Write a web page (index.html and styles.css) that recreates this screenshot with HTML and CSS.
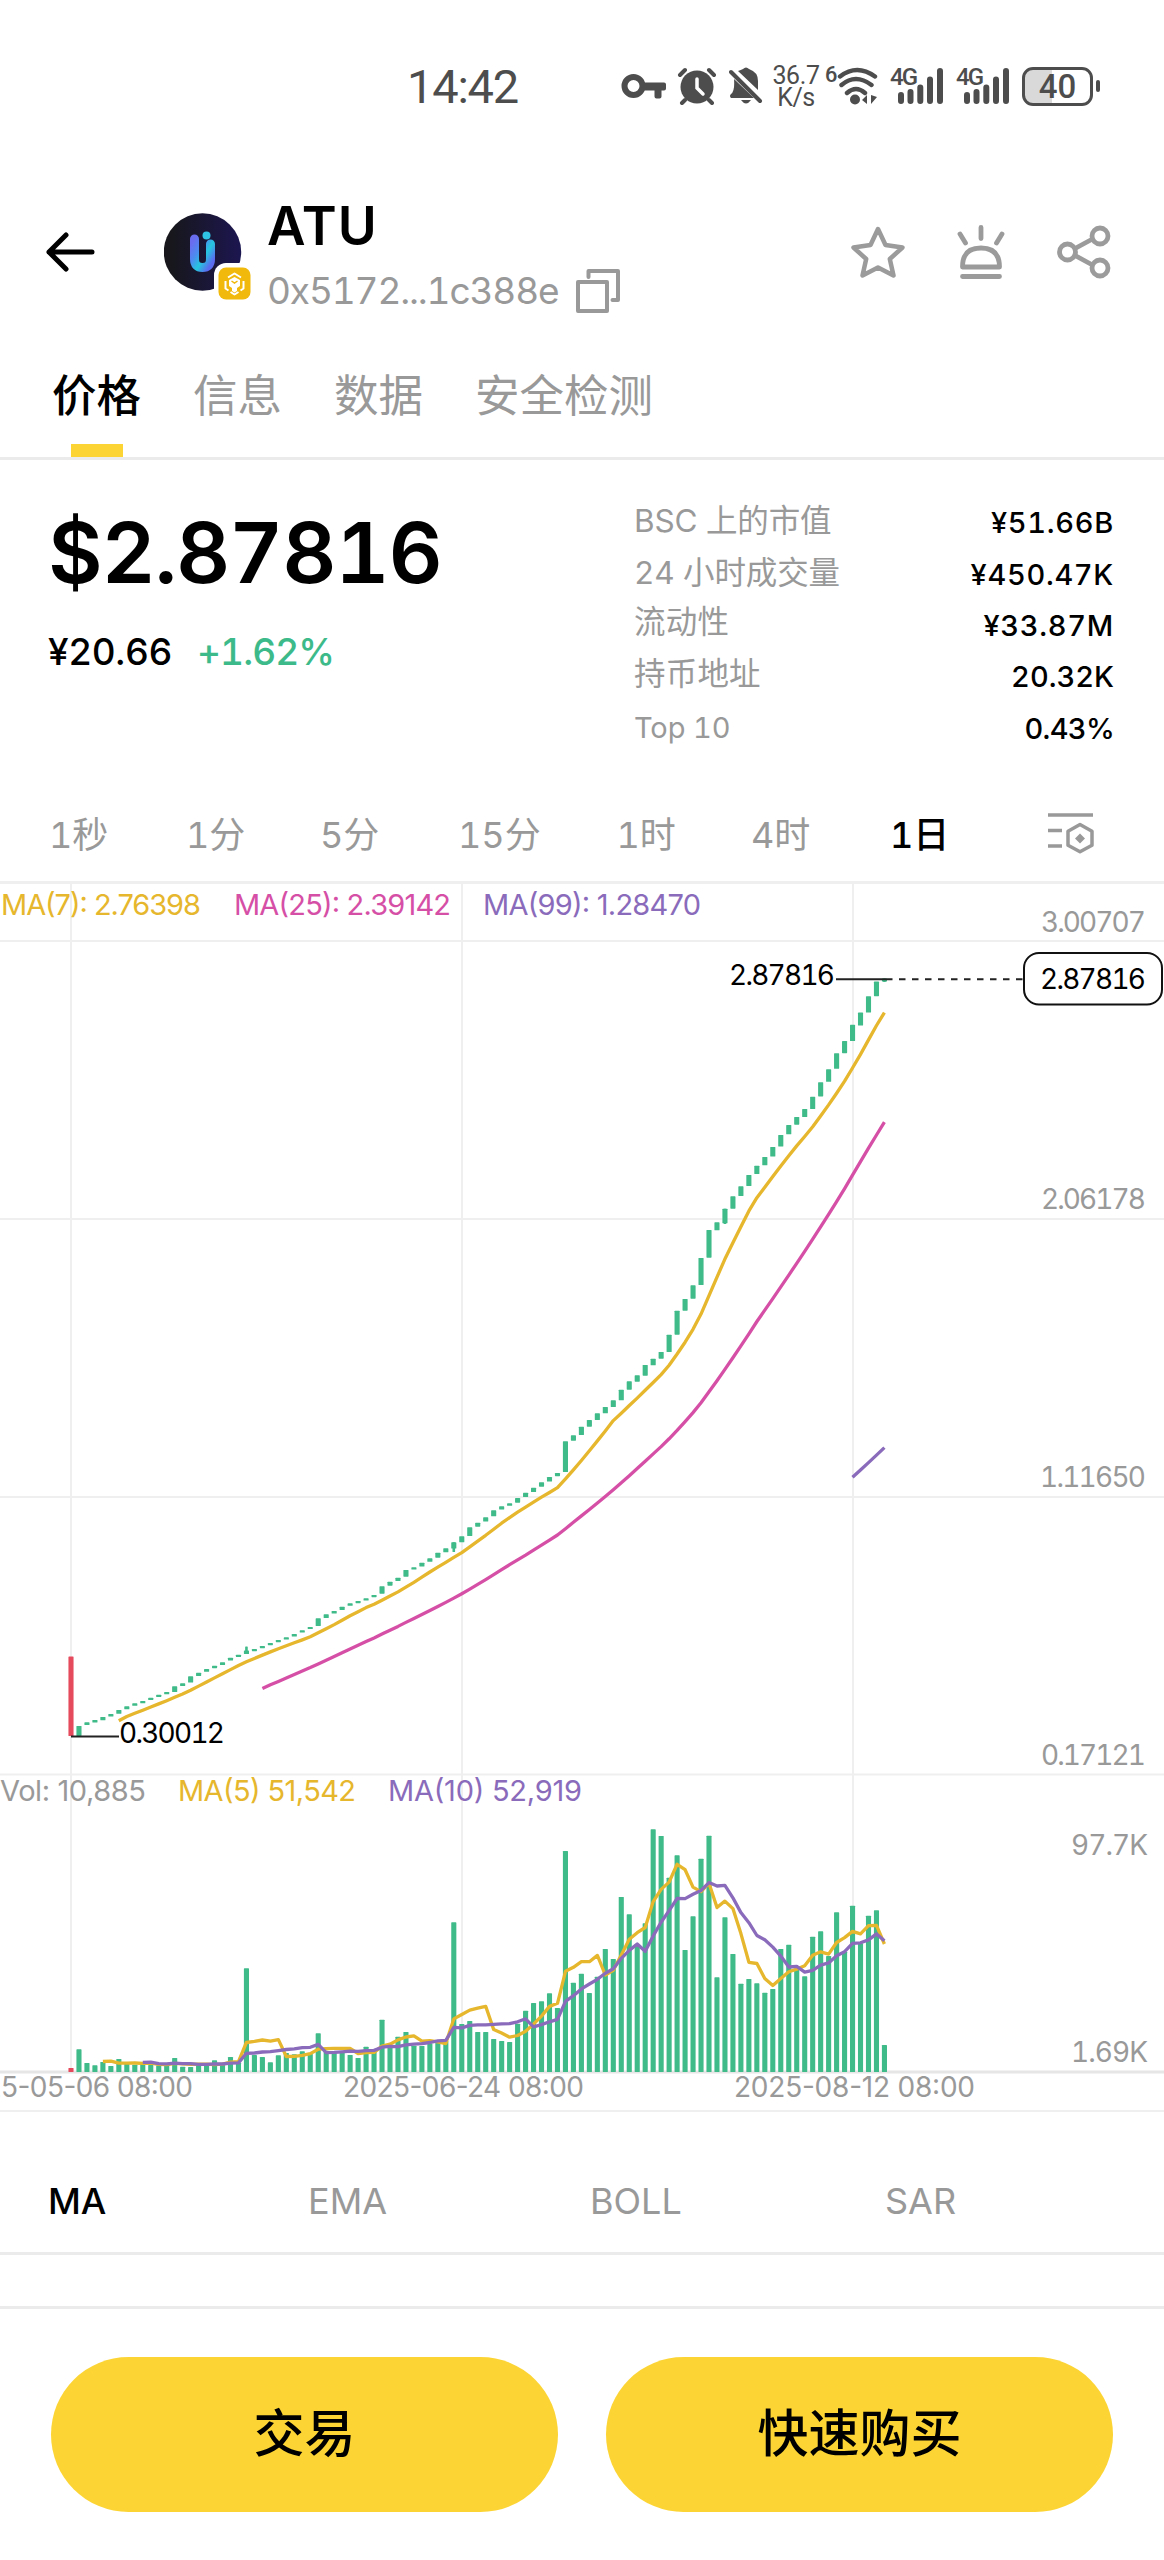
FILE: index.html
```html
<!DOCTYPE html>
<html lang="zh-CN">
<head>
<meta charset="utf-8">
<title>ATU</title>
<link rel="stylesheet" href="styles.css">
</head>
<body>
<div class="status">
  <div class="clock">14:42</div>
  <div class="status-icons">
    <svg class="key" width="46" height="26" viewBox="0 0 46 26"><circle cx="12.500" cy="13" r="9" fill="none" stroke="#4d4d4d" stroke-width="6"/><path d="M22 9.500h21q2 0 2 2v4q0 2-2 2h-2.500v6q0 2-2 2h-3q-2 0-2-2v-6h-11.500z" fill="#4d4d4d"/></svg>
    <svg class="alarm" width="40" height="38" viewBox="0 0 40 38" fill="none" stroke="#4d4d4d" stroke-linecap="round"><circle cx="20" cy="20" r="16.500" fill="#4d4d4d" stroke="none"/><path d="M3 8l5-5M37 8l-5-5M8 33l-3 3M32 33l3 3" stroke-width="4"/><path d="M20 12v9l6 6" stroke="#fff" stroke-width="3.500"/></svg>
    <svg class="bell" width="34" height="38" viewBox="0 0 34 38"><path d="M9 4q3-1 5-2q3-3 6 0q9 3 9 12v9zM5 12l20 19H2q-2-2 0-4q4-3 3-15z" fill="#4d4d4d"/><path d="M2 5l29 29" stroke="#4d4d4d" stroke-width="4" stroke-linecap="round"/><path d="M12 33h10q-5 7-10 0z" fill="#4d4d4d"/></svg>
    <div class="speed"><span>36.7</span><span>K/s</span></div>
    <span class="six">6</span>
    <svg class="wifi" width="42" height="38" viewBox="0 0 42 38"><g fill="none" stroke="#4d4d4d" stroke-width="4.400" stroke-linecap="round"><path d="M3 9.500q17-13 35 0M4.500 18q14-12 30 0M10 26q9-8 18 0"/></g><circle cx="18" cy="32.500" r="5" fill="#4d4d4d"/><path d="M30 28v9l-5-4zM34 28v9l6-7z" fill="#4d4d4d"/></svg>
    <div class="signal"><span>4G</span><svg width="46" height="38" viewBox="0 0 46 38"><path d="M3 28v6M12.500 25v9M22.300 20.500v13.500M32 12.500v21.500M42 4v30" stroke="#4d4d4d" stroke-width="6" stroke-linecap="round"/></svg></div>
    <div class="signal"><span>4G</span><svg width="46" height="38" viewBox="0 0 46 38"><path d="M3 28v6M12.500 25v9M22.300 20.500v13.500M32 12.500v21.500M42 4v30" stroke="#4d4d4d" stroke-width="6" stroke-linecap="round"/></svg></div>
    <div class="battery"><span>40</span></div><i class="nub"></i>
  </div>
</div>

<header class="header">
  <svg class="back" width="50" height="40" viewBox="0 0 50 40" fill="none" stroke="#000" stroke-width="5" stroke-linecap="round" stroke-linejoin="round"><path d="M46 20H3M20 3L3 20l17 17"/></svg>
  <svg class="avatar" width="90" height="90" viewBox="0 0 90 90">
    <defs>
      <linearGradient id="disc" x1="0" x2="1"><stop offset=".1" stop-color="#17171c"/><stop offset="1" stop-color="#1c1650"/></linearGradient>
      <linearGradient id="mark" x1="0" x2=".9" y1="0" y2="1"><stop offset="0" stop-color="#6a6cf0"/><stop offset=".35" stop-color="#4b8cf0"/><stop offset=".65" stop-color="#25c6de"/><stop offset="1" stop-color="#5b6bf0"/></linearGradient>
    </defs>
    <circle cx="38.500" cy="39" r="38.700" fill="url(#disc)"/>
    <path d="M30.500 26v20q0 8.500 8 8.500t8-8.500V31" fill="none" stroke="url(#mark)" stroke-width="9" stroke-linecap="round"/>
    <circle cx="42.500" cy="22.500" r="4" fill="#2fc3e4"/>
    <rect x="50" y="50" width="42" height="42" rx="12" fill="#fff"/>
    <rect x="54.500" y="54.500" width="32" height="32" rx="7.500" fill="#f0b90b"/>
    <g fill="none" stroke="#fff" stroke-width="2" stroke-linejoin="round"><path d="M64 64.500l6.500-4 6.500 4M61.500 68v7.500l3 2M79.500 68v7.500l-3 2M66.500 79l4 2.500 4-2.500"/></g>
    <path d="M65 67l5.500-3 5.500 3v6l-3 2v3l-2.500 1.500L68 78v-3l-3-2z" fill="#fff"/><path d="M67.500 68l3 2 3-2" stroke="#f0b90b" stroke-width="1.500" fill="none"/>
  </svg>
  <div class="token">
    <h1>ATU</h1>
    <div class="address"><span>0x5172...1c388e</span>
      <svg width="46" height="46" viewBox="0 0 46 46" fill="none" stroke="#999" stroke-width="4" stroke-linejoin="round" stroke-linecap="round"><rect x="3" y="14" width="29" height="29"/><path d="M13.500 9V3H43v29h-5.500"/></svg>
    </div>
  </div>
  <div class="actions">
    <svg width="54" height="54" viewBox="0 0 54 54" fill="none" stroke="#9b9b9b" stroke-width="4.500" stroke-linejoin="round"><path d="M27 4l7.500 16 17 2.500L38.800 34 42.500 50.500 27 42.500 11.500 50.500 15.200 34 2.500 22.500l17-2.500z"/></svg>
    <svg width="54" height="54" viewBox="0 0 54 54" fill="none" stroke="#9b9b9b" stroke-width="4.800" stroke-linejoin="round" stroke-linecap="round"><path d="M27 2.500v11M6 9l5.500 9M48 9l-5.500 9M8.500 42q0-19 18.500-19t18.500 19zM8.500 51.500h37"/></svg>
    <svg width="54" height="54" viewBox="0 0 54 54" fill="none" stroke="#9b9b9b" stroke-width="4.800"><circle cx="10.500" cy="27" r="8"/><circle cx="43" cy="11" r="8"/><circle cx="43" cy="43" r="8"/><path d="M18 23.500L35.500 14M18 30.500L35.500 40"/></svg>
  </div>
</header>

<nav class="tabs"><a class="active">价格</a><a>信息</a><a>数据</a><a>安全检测</a></nav>

<section class="summary">
  <div class="quote">
    <div class="price">$2.87816</div>
    <div class="sub"><span class="cny">¥20.66</span><span class="up">+1.62%</span></div>
  </div>
  <dl class="stats">
    <div><dt>BSC 上的市值</dt><dd class="money">¥51.66B</dd></div>
    <div><dt>24 小时成交量</dt><dd class="money">¥450.47K</dd></div>
    <div><dt class="han">流动性</dt><dd class="money">¥33.87M</dd></div>
    <div><dt class="han">持币地址</dt><dd>20.32K</dd></div>
    <div><dt class="latin">Top 10</dt><dd class="share">0.43%</dd></div>
  </dl>
</section>

<nav class="periods">
  <a>1秒</a><a>1分</a><a>5分</a><a>15分</a><a>1时</a><a>4时</a><a class="active">1日</a>
  <svg width="46" height="42" viewBox="0 0 46 42" fill="none" stroke="#999" stroke-width="3.500"><path d="M0 3h45M0 18.500h14M0 34h14"/><path d="M32 12.500l12 6.700v14L32 39.800 20 33.200v-14z" stroke-linejoin="round"/><path d="M32 21.500l5 5-5 5-5-5z" fill="#999" stroke="none"/></svg>
</nav>

<svg class="chart" id="chart" width="1164" height="1231" viewBox="0 881 1164 1231">
  <g fill="#efefef">
    <rect x="0" y="881" width="1164" height="3"/>
    <rect x="0" y="940" width="1164" height="2"/><rect x="0" y="1218" width="1164" height="2"/>
    <rect x="0" y="1496" width="1164" height="2"/><rect x="0" y="1773.500" width="1164" height="2"/>
    <rect x="70" y="884" width="2" height="1188"/><rect x="461" y="884" width="2" height="1188"/><rect x="852" y="884" width="2" height="1188"/>
    <rect x="0" y="2110" width="1164" height="2"/>
  </g>
  <rect x="0" y="2070.500" width="1164" height="3" fill="#e6e6e6"/>
  <g id="plot"></g>
  <g class="legend">
    <text class="ma-a" x="1" y="915" textLength="200">MA(7): 2.76398</text>
    <text class="ma-b" x="234" y="915" textLength="217">MA(25): 2.39142</text>
    <text class="ma-c" x="483" y="915" textLength="218">MA(99): 1.28470</text>
    <text x="0" y="1800.500" textLength="146">Vol: 10,885</text>
    <text class="ma-a" x="178" y="1800.500" textLength="178">MA(5) 51,542</text>
    <text class="ma-c" x="388" y="1800.500" textLength="194">MA(10) 52,919</text>
  </g>
  <g class="scale">
    <text x="1041" y="931.500" textLength="105">3.00707</text>
    <text x="1041" y="1209" textLength="105">2.06178</text>
    <text x="1040" y="1487" textLength="106">1.11650</text>
    <text x="1041" y="1764.500" textLength="105">0.17121</text>
    <text x="1071" y="1854.500" textLength="77">97.7K</text>
    <text x="1071" y="2062" textLength="77">1.69K</text>
  </g>
  <g class="dates">
    <text x="-49" y="2097" textLength="242">2025-05-06 08:00</text>
    <text x="343" y="2097" textLength="241">2025-06-24 08:00</text>
    <text x="734" y="2097" textLength="241">2025-08-12 08:00</text>
  </g>
  <path d="M71 1736.500h48M836 979.300h50" stroke="#222" stroke-width="2"/>
  <path d="M886 979.300h138" stroke="#222" stroke-width="2" stroke-dasharray="6.500 6.500"/>
  <rect x="1024" y="953" width="138" height="51.500" rx="15" fill="#fff" stroke="#111" stroke-width="2"/>
  <g class="marks">
    <text x="1040" y="989" textLength="106">2.87816</text>
    <text x="729" y="985" textLength="106">2.87816</text>
    <text x="119" y="1743" textLength="106">0.30012</text>
  </g>
</svg>

<nav class="indicators"><a class="active">MA</a><a>EMA</a><a>BOLL</a><a>SAR</a></nav>
<div class="spacer"></div>
<footer class="footer"><button>交易</button><button>快速购买</button></footer>
<script src="chart.js"></script>
</body>
</html>
```
FILE: styles.css
```css
* { box-sizing: border-box; margin: 0; padding: 0; }
body { width: 1164px; height: 2560px; overflow: hidden; background: #fff; color: #000; font-family: Inter, "Noto Sans CJK SC", sans-serif; font-variant-numeric: tabular-nums; }
svg { display: block; flex: none; }

.status { height: 150px; padding: 56px 64px 0 407px; display: flex; justify-content: space-between; color: #4d4d4d; font-family: Roboto, sans-serif; }
.clock { font-size: 47px; line-height: 62px; letter-spacing: -1.200px; }
.status-icons { display: flex; height: 60px; align-items: center; }
.alarm { margin-left: 10px; }
.bell { margin-left: 12px; }
.speed { display: flex; flex-direction: column; align-items: center; width: 48px; margin: 2px 0 0 9px; font-size: 25px; line-height: 22px; letter-spacing: -.4px; }
.six { font-size: 22px; font-weight: 500; line-height: 22px; align-self: flex-start; margin: 8px 0 0 5px; width: 12px; }
.signal { display: flex; width: 55px; margin-left: 11px; }
.signal span { font-size: 24px; font-weight: 500; line-height: 20px; width: 8px; letter-spacing: -2px; white-space: nowrap; }
.battery { width: 71px; height: 39px; margin-left: 11px; border: 3px solid #4d4d4d; border-radius: 11px; background: linear-gradient(90deg, #d9d9d9 42%, #fff 42%); font-size: 33px; font-weight: 500; line-height: 33px; text-align: center; }
.nub { width: 4px; height: 12px; margin-left: 3px; border-radius: 2px; background: #4d4d4d; }

.header { height: 200px; padding: 0 53px 0 46px; display: flex; align-items: flex-start; }
.back { margin-top: 82px; }
.avatar { margin: 63px 0 0 68px; }
.token { margin-left: 13px; padding-top: 45px; }
.token h1 { font-size: 53px; line-height: 62px; font-weight: 600; letter-spacing: .9px; }
.address { display: flex; align-items: center; color: #999; font-size: 37px; line-height: 46px; padding-top: 11px; }
.address span { width: 308px; letter-spacing: -1.150px; white-space: nowrap; }
.actions { margin: 75px 0 0 auto; display: flex; gap: 49px; }

.tabs { height: 110px; padding: 0 52px; display: flex; gap: 52px; border-bottom: 3px solid #ebebeb; color: #999; font: 400 44.500px/86px "Noto Sans CJK SC", sans-serif; }
.tabs .active { color: #000; font-weight: 500; display: flex; flex-direction: column; align-items: center; }
.tabs .active::after { content: ""; width: 52px; height: 13px; margin-top: 8px; background: #fcd535; }

.summary { height: 323px; padding: 37px 50px 0 48px; display: flex; justify-content: space-between; }
.price { font-size: 84px; line-height: 111px; font-weight: 600; letter-spacing: -1.200px; }
.sub { display: flex; gap: 25px; margin-top: 22px; font-size: 37px; line-height: 44px; font-weight: 500; }
.cny { letter-spacing: -.4px; }
.up { color: #3dba89; letter-spacing: -.9px; }
.stats { width: 480px; }
.stats div { height: 51.400px; display: flex; justify-content: space-between; align-items: center; font-size: 29px; line-height: 51px; }
.stats dt { color: #999; font-size: 31.500px; margin-top: -4px; letter-spacing: -.1px; }
.stats .han { margin-top: -7px; letter-spacing: .2px; }
.stats .latin { font-size: 29px; margin-top: -1px; }
.stats dd { font-weight: 500; }
.stats .money { letter-spacing: .7px; }
.stats .share { letter-spacing: -.7px; }

.periods { height: 98px; padding: 2px 0 0 49px; display: grid; grid-template-columns: 137px 134px 138px 158.500px 134.500px 139px 158px 46px; align-items: center; color: #999; font-size: 36px; }
.periods a { margin-top: -2px; }
.periods .active { color: #000; font-weight: 500; }

.chart text { font-family: Inter, sans-serif; font-size: 29px; }
.legend, .scale, .dates { fill: #999; }
.chart .legend text, .chart .dates text { font-variant-numeric: normal; }
.chart .scale text, .chart .marks text, .chart .dates text { font-size: 28px; }
.chart .ma-a { fill: #e6b62c; }
.chart .ma-b { fill: #d64fa6; }
.chart .ma-c { fill: #8a6bbb; }

.indicators { height: 143px; padding-top: 66px; border-bottom: 3px solid #ebebeb; display: grid; grid-template-columns: 260px 282px 295px auto; padding-left: 48px; font-size: 36px; line-height: 46px; color: #999; }
.indicators .active { color: #000; font-weight: 500; }
.spacer { height: 51px; }
.footer { border-top: 3px solid #ebebeb; padding: 48px 51px 0; display: grid; grid-template-columns: 1fr 1fr; gap: 48px; }
.footer button { height: 155px; padding-bottom: 8px; border: 0; border-radius: 78px; background: #fcd535; color: #000; font: 500 51px/1 "Noto Sans CJK SC", sans-serif; }
```
FILE: chart.js
```js
// Daily candles: [top, bottom] in chart units; rising days close at the top.
const candles = [
[1656.5,1736],[1726,1736],[1722.3,1725],[1720,1722.5],[1717,1720.3],[1714,1716.5],[1710,1713.8],[1706.3,1709.3],[1703.3,1705.8],[1701,1703.3],
[1697.7,1700],[1694.7,1697],[1692,1694.3],[1686.3,1692],[1683.3,1686],[1676.3,1682.5],[1672.7,1676],[1669,1671.8],[1665.7,1668.2],[1662.3,1665],
[1657.7,1660.5],[1654.7,1657],[1650.5,1654],[1649,1651.2],[1646,1648.2],[1643,1645.2],[1640,1642.2],[1637.3,1639.5],[1634,1636.5],[1630.3,1632.5],
[1627,1629],[1618.3,1626],[1614.3,1618],[1611,1613.5],[1606.7,1610],[1603.3,1605.8],[1601,1603.2],[1598.3,1600.5],[1595,1597.2],[1586.3,1593.7],
[1581.7,1585.7],[1577.7,1581],[1570,1576.7],[1567.3,1569.5],[1562.7,1566.5],[1558.3,1561.8],[1552.7,1557.7],[1548.3,1552.3],[1542.3,1548.5],[1536.3,1542.3],
[1527.3,1536],[1522.7,1526.7],[1517.3,1521.5],[1510.3,1516.3],[1506.3,1509.5],[1503.3,1505.8],[1498,1502.7],[1492.7,1497],[1487.7,1492],[1482.3,1486.7],
[1477,1481.5],[1473,1476.2],[1441.3,1472],[1435.3,1440.7],[1426.7,1435],[1420,1426.7],[1413.3,1420],[1407,1413.3],[1400.3,1407],[1389.7,1400.3],
[1381.3,1389.7],[1375.3,1381.7],[1365,1375.7],[1358.7,1365.3],[1352,1358.7],[1334.7,1352],[1310.7,1334.7],[1299,1310.7],[1285.3,1298.7],[1258,1285],
[1230,1257.7],[1222.3,1230.3],[1208.7,1223.3],[1196.3,1208.7],[1186.3,1196],[1174.9,1186],[1165.7,1174],[1156.9,1165.3],[1147,1156.5],[1135,1146.5],
[1125,1134.3],[1117,1124.7],[1109,1117],[1096.8,1109],[1082.2,1096.4],[1069.2,1081.8],[1053.2,1068.8],[1041,1053.2],[1024.8,1041],[1012.6,1025.6],
[996.2,1012.6],[981.6,996.2],[978.6,981.6]];
// Upper and lower shadows that reach past the body.
const wicks = { 22: [1646.5, 1654], 48: [1542.3, 1552], 82: [1208.7, 1224], 102: [978.6, 982] };
// Daily volume, measured down from the top of the volume pane in thirds.
const volume = [924,868,909,916,906,918,897,910,914,910,915,916,914,894,920,921,914,913,901,912,891,908,625,885,891,907,886,879,883,874,882,820,872,877,874,885,894,860,873,779,857,830,816,857,858,850,846,843,487,792,783,816,816,837,843,846,791,752,729,724,700,744,273,668,641,699,650,567,597,411,463,552,490,208,228,353,286,570,469,296,227,652,472,582,671,657,670,698,687,567,554,630,649,530,514,588,457,575,437,550,467,451,855].map(v => 1760 + v / 3);

const NS = "http://www.w3.org/2000/svg";
const plot = document.getElementById("plot");
const xAt = i => 71 + 7.975 * i;
function add(tag, attrs) {
  const el = document.createElementNS(NS, tag);
  for (const k in attrs) el.setAttribute(k, attrs[k]);
  plot.appendChild(el);
}
function bar(i, top, bottom, width, red) {
  add("rect", { x: xAt(i) - width / 2, y: top, width, height: bottom - top, rx: .6, fill: red ? "#e5495c" : "#3fba89" });
}
function average(values, n, color) {
  const pts = [];
  for (let i = n - 1; i < values.length; i++) {
    let sum = 0;
    for (let j = 0; j < n; j++) sum += values[i - j];
    pts.push(xAt(i).toFixed(1) + "," + (sum / n).toFixed(1));
  }
  add("polyline", { points: pts.join(" "), fill: "none", stroke: color, "stroke-width": 3.3, "stroke-linejoin": "round" });
}
candles.forEach((c, i) => bar(i, c[0], c[1], 5.1, i === 0));
for (const i in wicks) bar(+i, wicks[i][0], wicks[i][1], 2.6, false);
volume.forEach((v, i) => bar(i, v, 2072, 5.1, i === 0));
const close = candles.map((c, i) => i === 0 ? c[1] : c[0]);
average(close, 7, "#e6b62c");
average(close, 25, "#d64fa6");
average(close, 99, "#8a6bbb");
average(volume, 5, "#e6b62c");
average(volume, 10, "#8a6bbb");
```
